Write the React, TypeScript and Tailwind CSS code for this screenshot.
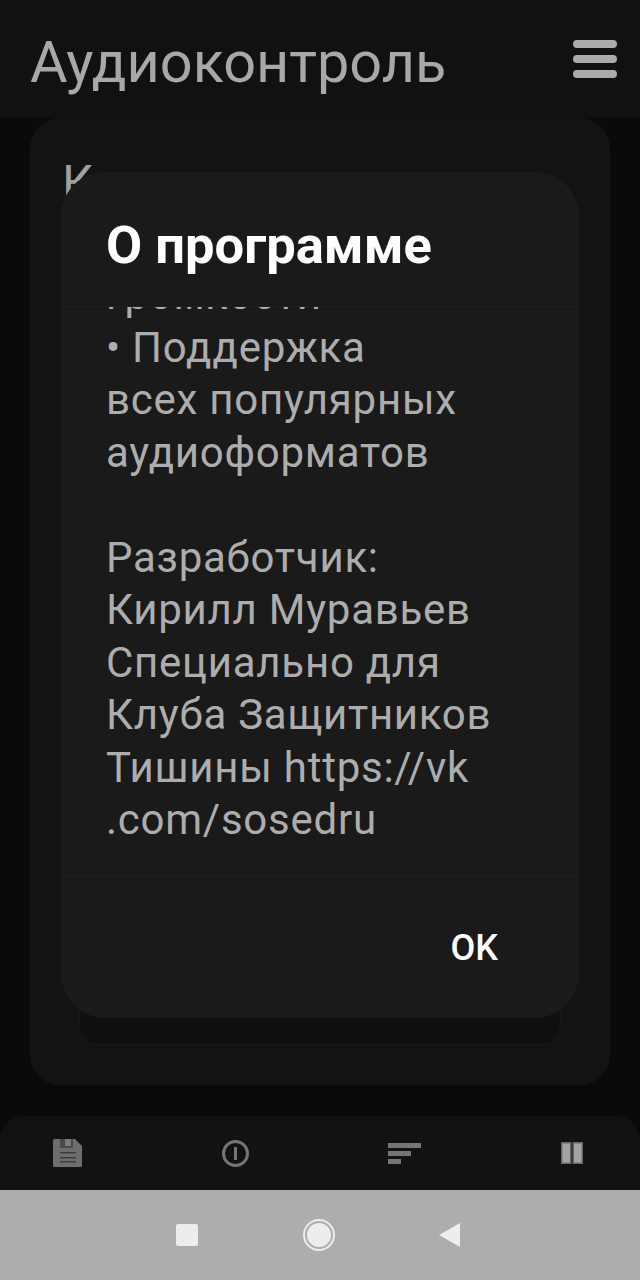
const font = { fontFamily: 'Roboto, sans-serif' }

function SaveIcon() {
  return (
    <svg className="w-[29px] h-[28px]" viewBox="0 0 29 28" fill="none">
      <path
        d="M1.5 0H22l7 7v19.5a1.5 1.5 0 0 1-1.5 1.5h-26A1.5 1.5 0 0 1 0 26.5v-25A1.5 1.5 0 0 1 1.5 0z"
        fill="#6e6e6e"
      />
      <rect x="7" y="0" width="13" height="9" fill="#4a4a4a" />
      <rect x="12" y="0" width="6" height="7" fill="#7a7a7a" />
      <rect x="7" y="13" width="16" height="1.5" fill="#3c3c3c" />
      <rect x="7" y="18" width="16" height="1.5" fill="#3c3c3c" />
      <rect x="7" y="22" width="16" height="1.5" fill="#3c3c3c" />
    </svg>
  )
}

function InfoIcon() {
  return (
    <svg className="w-[27px] h-[27px]" viewBox="0 0 27 27" fill="none">
      <circle cx="13.5" cy="13.5" r="12" stroke="#757575" strokeWidth="3" />
      <rect x="12" y="7" width="3" height="13" fill="#757575" />
    </svg>
  )
}

function SortIcon() {
  return (
    <svg className="w-[33px] h-[21px]" viewBox="0 0 33 21" fill="none">
      <rect x="0" y="0" width="33" height="5" fill="#757575" />
      <rect x="0" y="8" width="23" height="5" fill="#757575" />
      <rect x="0" y="16" width="13" height="5" fill="#757575" />
    </svg>
  )
}

function PauseIcon() {
  return (
    <svg className="w-[22px] h-[22px]" viewBox="0 0 22 22" fill="none">
      <rect x="0.75" y="0.75" width="9" height="20.5" fill="#a3a3a3" stroke="#666666" strokeWidth="1.5" />
      <rect x="12.25" y="0.75" width="9" height="20.5" fill="#a3a3a3" stroke="#666666" strokeWidth="1.5" />
    </svg>
  )
}

export default function App() {
  return (
    <div className="relative w-[640px] h-[1280px] flex flex-col overflow-hidden bg-[#0a0a0a]" style={font}>
      {/* Шапка */}
      <header className="h-[118px] shrink-0 bg-[#111111] flex items-center justify-between pl-[30px] pr-[23px]">
        <h1 className="mt-[7px] text-[57.6px] leading-none text-[#a8a8a8] font-normal">Аудиоконтроль</h1>
        <div className="flex flex-col gap-[7px] w-[44px]">
          <div className="h-[8px] rounded-full bg-[#ababab]" />
          <div className="h-[8px] rounded-full bg-[#ababab]" />
          <div className="h-[8px] rounded-full bg-[#ababab]" />
        </div>
      </header>

      {/* Карточка под диалогом */}
      <main className="flex-1 px-[30px] pb-[31px]">
        <div className="h-full rounded-[30px] bg-[#131313] px-[32px] pt-[41px] pb-[40px] flex flex-col justify-between">
          <p className="text-[48px] leading-none text-[#a0a0a0] whitespace-nowrap">Контроль шума</p>
          <div className="mx-[17px] h-[200px] rounded-[20px] border border-[#1a1a1a] bg-[#0f0f0f]" />
        </div>
      </main>

      {/* Нижняя панель */}
      <nav className="h-[74px] shrink-0 rounded-t-[24px] bg-[#121212] flex items-center justify-between pl-[53px] pr-[57px]">
        <SaveIcon />
        <InfoIcon />
        <SortIcon />
        <PauseIcon />
      </nav>

      {/* Системная навигация */}
      <div className="h-[90px] shrink-0 bg-[#adadad] flex items-center pl-[176px] gap-[104.5px]">
        <div className="w-[22px] h-[22px] rounded-[2px] bg-[#ededed]" />
        <div className="w-[32px] h-[32px] rounded-full border-[2px] border-[#ededed] flex items-center justify-center">
          <div className="w-[24px] h-[24px] rounded-full bg-[#ededed]" />
        </div>
        <svg className="w-[21px] h-[24px]" viewBox="0 0 21 24" fill="none">
          <path d="M21 0v24L0 12z" fill="#ededed" />
        </svg>
      </div>

      {/* Диалог */}
      <div className="absolute left-[61px] top-[172px] w-[518px] h-[846px] rounded-[44px] bg-[#1a1a1a] flex flex-col overflow-hidden">
        <div className="h-[135px] shrink-0 border-b border-[#202020] pl-[45px] pt-[44px]">
          <h2 className="text-[52.5px] leading-[58px] font-bold text-white whitespace-nowrap">О программе</h2>
        </div>
        <div className="flex-1 overflow-hidden pl-[45px] pr-[46px] text-[42px] leading-[52.5px] tracking-[0.75px] text-[#adadad]">
          <div className="-mt-[38px] whitespace-pre-line">
            {'громкости\n• Поддержка\nвсех популярных\nаудиоформатов\n\nРазработчик:\nКирилл Муравьев\nСпециально для\nКлуба Защитников\nТишины https://vk\n.com/sosedru'}
          </div>
        </div>
        <div className="h-[142px] shrink-0 border-t border-[#202020] flex items-start justify-end pr-[81px] pt-[50px]">
          <span className="text-[36px] leading-[42px] font-medium text-white">OK</span>
        </div>
      </div>
    </div>
  )
}
